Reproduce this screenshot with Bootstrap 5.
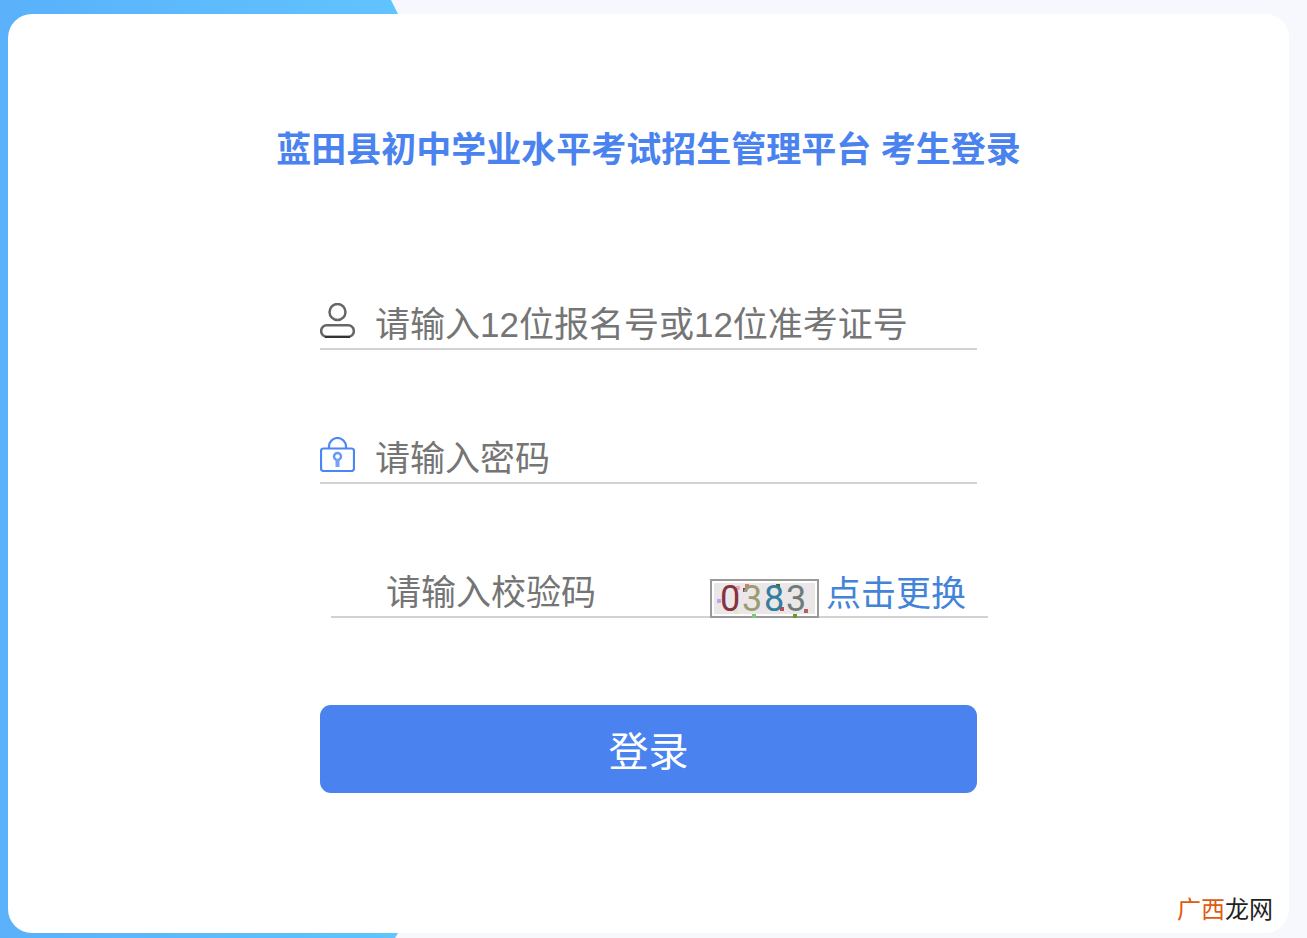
<!DOCTYPE html>
<html lang="zh-CN">
<head>
<meta charset="utf-8">
<meta name="viewport" content="width=device-width, initial-scale=1">
<title>考生登录</title>
<link href="https://cdn.jsdelivr.net/npm/bootstrap@5.3.0/dist/css/bootstrap.min.css" rel="stylesheet">
<style>
body{font-family:"Liberation Sans","Noto Sans CJK SC",sans-serif;background:#f7f8fd}
.page{padding:14px 18px 5px 8px;isolation:isolate}
.backdrop{width:430px;z-index:-1;background:linear-gradient(90deg,#5ab1fa,#60c4ff 400px);clip-path:polygon(0 0,391px 0,398px 14px,430px 50%,398px calc(100% - 5px),395px 100%,0 100%)}
.panel{border-radius:24px;padding:111px 16px 16px}
.title{font-size:35px;line-height:50px;color:#4a82ef;margin-bottom:125px}
.login-form{max-width:657px}
.field{height:50px;border-bottom:2px solid #d2d2d2;margin-bottom:84px}
.field svg{flex:none}
.field input{font-size:35px;line-height:46px;height:48px;color:#333;min-width:0;padding:2px 0 0}
.field input::placeholder{color:#757575;opacity:1}
.field-icon{margin:3px 20px 0 0}
.captcha-field{margin:0 -11px 87px 11px;padding-left:55px;padding-right:22px}
.captcha-btn{margin:11px 7px 0 0;overflow:visible}
.refresh{font-size:35px;line-height:46px;padding-top:3px;margin-bottom:-3px;color:#4384d9}
.btn-login{height:88px;border-radius:11px;background:#4a82ef;color:#fff;font-size:40px;line-height:60px;padding:11px 12px 6px}
.btn-login:hover{background:#3d73dd;color:#fff}
.site-mark{right:16px;bottom:5px;font-size:24px;line-height:36px;color:#222}
.site-mark span{color:#e05a10}
</style>
</head>
<body>
<div class="page position-relative d-flex min-vh-100">
  <div class="backdrop position-absolute top-0 bottom-0 start-0"></div>
  <main class="panel bg-white position-relative flex-grow-1">
    <h1 class="title fw-bold text-center">蓝田县初中学业水平考试招生管理平台 考生登录</h1>
    <form class="login-form mx-auto">
      <div class="field d-flex align-items-start">
        <label for="account" class="field-icon d-flex" aria-label="报名号">
          <svg width="35" height="35" viewBox="0 0 35 35" fill="none" stroke="#666" stroke-width="2.500"><circle cx="17.500" cy="9" r="8"/><rect x="1.200" y="22.200" width="32.600" height="11.600" rx="5.500"/><path d="M5 34h25" stroke="#333" stroke-width="2"/></svg>
        </label>
        <input id="account" type="text" class="flex-grow-1 border-0 bg-transparent" placeholder="请输入12位报名号或12位准考证号">
      </div>
      <div class="field d-flex align-items-start">
        <label for="password" class="field-icon d-flex" aria-label="密码">
          <svg width="35" height="35" viewBox="0 0 35 35" fill="none" stroke="#4a86f6" stroke-width="2.200"><path d="M9 11.500V9.500a8.500 8.500 0 0 1 17 0V11.500"/><rect x="1" y="11.500" width="33" height="22.500" rx="2.500"/><circle cx="17.500" cy="19.500" r="3.500" stroke="#6599f6" stroke-width="2.500"/><path d="M17.500 22v8" stroke="#76a3f7" stroke-width="4"/></svg>
        </label>
        <input id="password" type="password" class="flex-grow-1 border-0 bg-transparent" placeholder="请输入密码">
      </div>
      <div class="field captcha-field d-flex align-items-start">
        <input id="captcha" type="text" aria-label="校验码" class="flex-grow-1 border-0 bg-transparent" placeholder="请输入校验码">
        <svg class="captcha-btn" width="109" height="39" viewBox="0 0 109 39" role="img" aria-label="0383">
          <rect x="1" y="1" width="107" height="37" fill="#fff" stroke="#999" stroke-width="2"/>
          <rect x="4" y="4" width="101" height="31" fill="#ebe7e9"/>
          <path fill="#c5a0ee" d="M7 20h4v4H7z"/><path fill="#f3a7a9" d="M26 7h4v4h-4z"/><path fill="#dc7778" d="M35 5h4v4h-4z"/><path fill="#75485f" d="M33 9h4v4h-4z"/><path fill="#4b6a30" d="M66 5h4v4h-4z"/><path fill="#c14953" d="M70 28h4v4h-4z"/><path fill="#b85d61" d="M94 30h4v4h-4z"/><path fill="#dcecb8" d="M24 31h4v4h-4z"/><path fill="#7fc681" d="M42 35h4v4h-4z"/><path fill="#679b2c" d="M83 35h4v4h-4z"/>
          <g font-family="Roboto, sans-serif" font-size="36"><text x="10" y="32" fill="#853344">0</text><text x="32" y="32" fill="#9a9c70">3</text><text x="54" y="32" fill="#347f9d">8</text><text x="76" y="32" fill="#6e7b7b">3</text></g>
        </svg>
        <a href="#" class="refresh text-decoration-none text-nowrap">点击更换</a>
      </div>
      <button type="submit" class="btn btn-login border-0 w-100">登录</button>
    </form>
    <div class="site-mark position-absolute"><span>广西</span>龙网</div>
  </main>
</div>
<script src="https://cdn.jsdelivr.net/npm/bootstrap@5.3.0/dist/js/bootstrap.bundle.min.js"></script>
</body>
</html>
